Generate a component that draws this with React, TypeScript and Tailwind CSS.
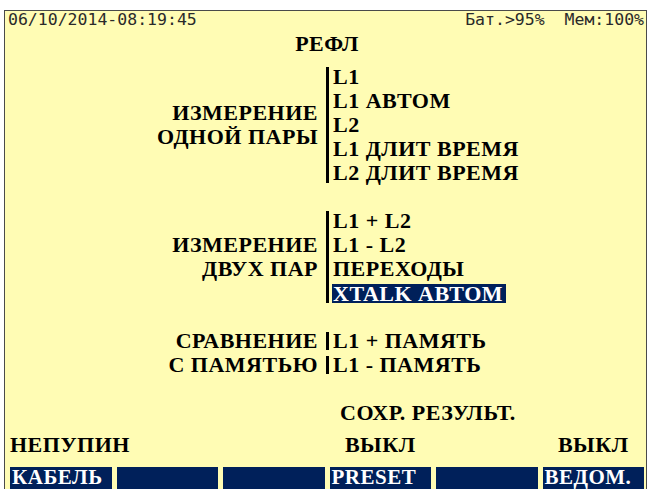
import React from "react";

const serif = "font-['Liberation_Serif','DejaVu_Serif',serif] font-bold tracking-[0.5px]";

type Item = { text: string; selected?: boolean };

function Bar({ className = "" }: { className?: string }) {
  return <div className={`w-[3px] shrink-0 bg-black ${className}`} />;
}

function ItemLine({ item }: { item: Item }) {
  return (
    <div className="flex h-[24px] items-center whitespace-pre">
      {item.selected ? (
        <span className="-ml-[1px] inline-block h-[19px] bg-[#00205a] pl-[1px] pr-[3px] leading-[19px] text-white">
          {item.text}
        </span>
      ) : (
        <span className="leading-[24px]">{item.text}</span>
      )}
    </div>
  );
}

// A group of menu entries with its caption on the left and one joined divider bar
function Group({ labels, items }: { labels: string[]; items: Item[] }) {
  return (
    <div className="flex">
      <div className="flex w-[308px] shrink-0 flex-col justify-center text-right leading-[24px]">
        {labels.map((l) => (
          <div key={l} className="whitespace-pre">
            {l}
          </div>
        ))}
      </div>
      <Bar className="ml-[8px] my-[2px]" />
      <div className="flex flex-col pl-[4px]">
        {items.map((it) => (
          <ItemLine key={it.text} item={it} />
        ))}
      </div>
    </div>
  );
}

// Caption and entry share a line, each line has its own bar segment
function PairedGroup({ rows }: { rows: [string, string][] }) {
  return (
    <div className="flex flex-col">
      {rows.map(([label, text]) => (
        <div key={text} className="flex h-[24px] items-center">
          <div className="w-[308px] shrink-0 whitespace-pre text-right leading-[24px]">{label}</div>
          <Bar className="ml-[8px] h-[18px]" />
          <div className="whitespace-pre pl-[4px] leading-[24px]">{text}</div>
        </div>
      ))}
    </div>
  );
}

const softKeys = ["КАБЕЛЬ", "", "", "PRESET", "", "ВЕДОМ."];

export default function App() {
  return (
    <div className="h-[489px] w-[648px] overflow-hidden bg-white pl-[4px] pt-[10px]">
      <div
        className={`flex h-[479px] w-[643px] flex-col border border-b-0 border-[#4a4a4a] bg-[#fffcb4] pl-[5px] pr-[2px] text-[22px] text-black ${serif}`}
      >
        <header className="-ml-[2px] flex h-[18px] justify-between font-['DejaVu_Sans_Mono',monospace] text-[16.5px] font-normal leading-[18px] tracking-normal text-[#2a2a2a]">
          <span>06/10/2014-08:19:45</span>
          <span className="whitespace-pre">Бат.&gt;95%  Мем:100%</span>
        </header>

        <div className="mt-[3px] text-center leading-[24px]">РЕФЛ</div>

        <div className="mt-[9px]">
          <Group
            labels={["ИЗМЕРЕНИЕ", "ОДНОЙ ПАРЫ"]}
            items={[
              { text: "L1" },
              { text: "L1 АВТОМ" },
              { text: "L2" },
              { text: "L1 ДЛИТ ВРЕМЯ" },
              { text: "L2 ДЛИТ ВРЕМЯ" },
            ]}
          />
        </div>

        <div className="mt-[24px]">
          <Group
            labels={["ИЗМЕРЕНИЕ", "ДВУХ ПАР"]}
            items={[
              { text: "L1 + L2" },
              { text: "L1 - L2" },
              { text: "ПЕРЕХОДЫ" },
              { text: "XTALK АВТОМ", selected: true },
            ]}
          />
        </div>

        <div className="mt-[24px]">
          <PairedGroup
            rows={[
              ["СРАВНЕНИЕ", "L1 + ПАМЯТЬ"],
              ["С ПАМЯТЬЮ", "L1 - ПАМЯТЬ"],
            ]}
          />
        </div>

        <div className="mt-[24px] pl-[330px] leading-[24px]">СОХР. РЕЗУЛЬТ.</div>

        <div className="mt-[8px] grid grid-cols-6 gap-[5px] leading-[24px]">
          <div className="whitespace-pre">НЕПУПИН</div>
          <div />
          <div />
          <div className="flex justify-center">ВЫКЛ</div>
          <div />
          <div className="flex justify-center">ВЫКЛ</div>
        </div>

        <div className="mt-[10px] grid grid-cols-6 gap-[5px]">
          {softKeys.map((k, i) => (
            <div key={i} className="h-[22px] bg-[#00205a] pl-[2px] text-[21px] leading-[20px] text-white">
              {k}
            </div>
          ))}
        </div>
      </div>
    </div>
  );
}
